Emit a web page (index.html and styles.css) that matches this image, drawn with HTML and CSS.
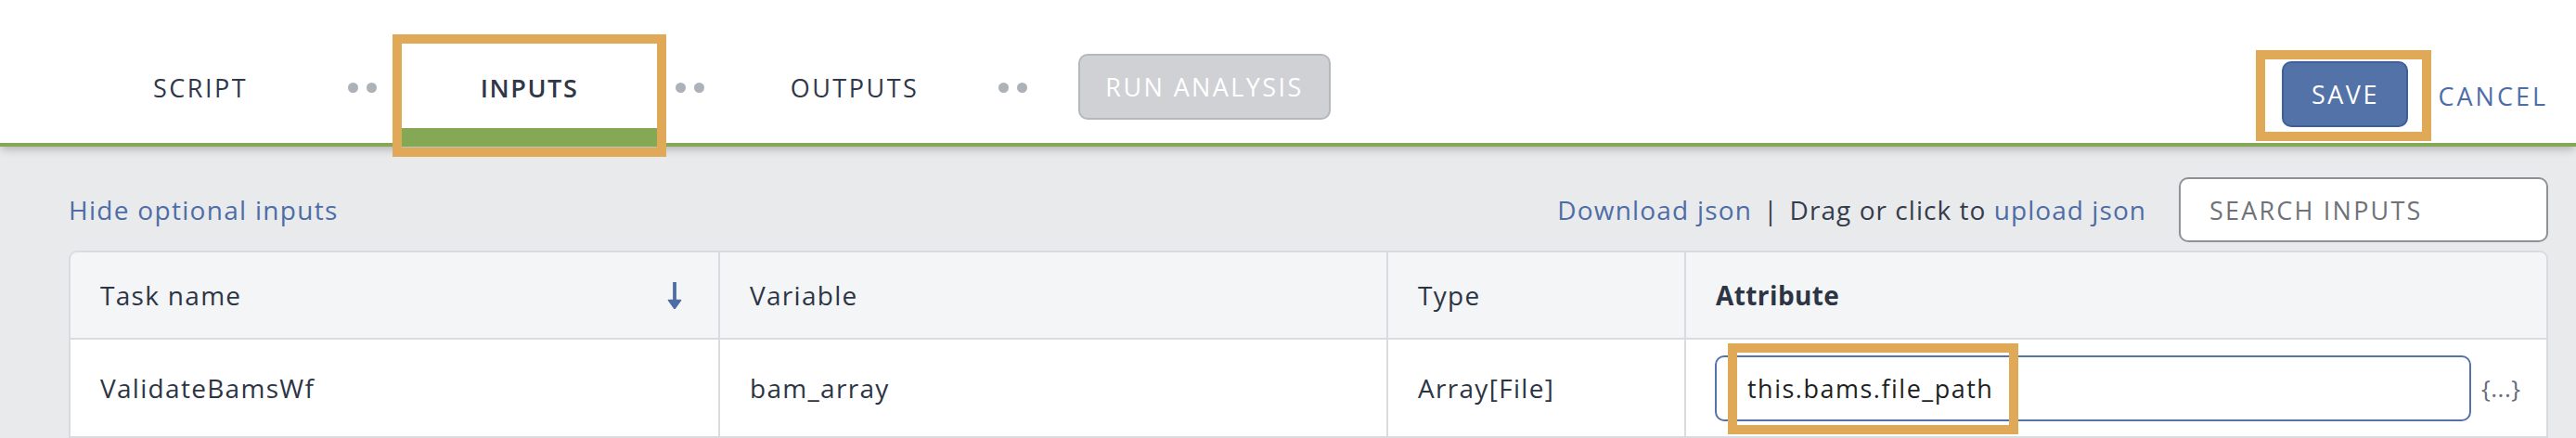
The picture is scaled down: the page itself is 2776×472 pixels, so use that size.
FILE: index.html
```html
<!DOCTYPE html>
<html lang="en">
<head>
<meta charset="utf-8">
<title>Inputs</title>
<link rel="stylesheet" href="styles.css">
</head>
<body>
<header class="topbar">
  <nav class="steps">
    <div class="step step-script">SCRIPT</div>
    <div class="sep"><span class="dot"></span><span class="dot"></span></div>
    <div class="step step-inputs active">INPUTS</div>
    <div class="sep"><span class="dot"></span><span class="dot"></span></div>
    <div class="step step-outputs">OUTPUTS</div>
    <div class="sep"><span class="dot"></span><span class="dot"></span></div>
    <button class="btn-run" type="button" disabled>RUN ANALYSIS</button>
  </nav>
  <div class="actions">
    <div class="highlight-save"><button class="btn-save" type="button">SAVE</button></div>
    <a class="cancel">CANCEL</a>
  </div>
</header>
<main class="content">
  <div class="toolbar">
    <a class="link">Hide optional inputs</a>
    <div class="toolbar-right">
      <span class="json-actions"><a class="link dl">Download json</a><span class="pipe">|</span>Drag or click to <a class="link">upload json</a></span>
      <div class="search">SEARCH INPUTS</div>
    </div>
  </div>
  <div class="grid-table">
    <div class="row head">
      <div class="cell c1"><span>Task name</span>
        <svg class="sort" width="16" height="29" viewBox="0 0 16 29"><path d="M8 0v21" stroke="#4e6da6" stroke-width="3.8" fill="none"/><path d="M1.5 19.5h13L8 28.5z" fill="#4e6da6" stroke="#4e6da6" stroke-width="1.6" stroke-linejoin="round"/></svg>
      </div>
      <div class="cell c2">Variable</div>
      <div class="cell c3">Type</div>
      <div class="cell c4 strong">Attribute</div>
    </div>
    <div class="row body">
      <div class="cell c1">ValidateBamsWf</div>
      <div class="cell c2">bam_array</div>
      <div class="cell c3">Array[File]</div>
      <div class="cell c4">
        <div class="attr-input"><span class="attr-text">this.bams.file_path</span></div>
        <span class="expr">{...}</span>
      </div>
    </div>
  </div>
</main>
</body>
</html>
```

FILE: styles.css
```css
*, *::before, *::after { box-sizing: border-box; }

html, body {
  margin: 0;
  padding: 0;
}

body {
  width: 2776px;
  height: 472px;
  overflow: hidden;
  background: #e9eaec;
  font-family: "Open Sans", "Noto Sans", sans-serif;
  color: #2d3545;
}

/* ---------- top bar ---------- */
.topbar {
  position: relative;
  z-index: 2;
  display: flex;
  height: 158px;
  background: #fff;
  border-bottom: 4px solid #84a854;
  box-shadow: 0 3px 10px -1px rgba(0, 0, 0, 0.28);
}

.steps {
  display: flex;
  align-items: stretch;
  padding-left: 77px;
}

.step {
  display: flex;
  align-items: center;
  justify-content: center;
  padding: 50px 0 16px;
  font-size: 27px;
  letter-spacing: 2.5px;
  color: #2f3749;
}

.step-script { width: 278px; }
.step-inputs { width: 275px; }
.step-outputs { width: 270px; }

.step.active {
  position: relative;
  padding-bottom: 0;
  border-bottom: 16px solid #84a854;
  font-weight: 600;
  letter-spacing: 1.6px;
}

.step.active::before {
  content: "";
  position: absolute;
  left: -10px;
  right: -10px;
  top: 37px;
  bottom: -31px;
  border: 10px solid #e0a957;
}

.sep {
  display: flex;
  align-items: center;
  gap: 9px;
  margin: 0 27px 0 20px;
  padding: 50px 0 16px;
}

.dot {
  width: 11px;
  height: 11px;
  border-radius: 50%;
  background: #adb1b8;
}

.btn-run {
  align-self: flex-start;
  margin: 58px 0 0 28px;
  width: 272px;
  height: 71px;
  border: 2px solid #b5b8bd;
  border-radius: 10px;
  background: #cfd1d5;
  color: #fff;
  font-family: "Open Sans", sans-serif;
  font-size: 27px;
  letter-spacing: 2.4px;
  padding: 0;
}

.actions {
  margin-left: auto;
  align-self: flex-start;
  margin-top: 54px;
  padding-right: 30px;
  display: flex;
  align-items: center;
  gap: 7px;
}

.highlight-save {
  border: 10px solid #e0a957;
  padding: 2px 15px 5px 18px;
}

.btn-save {
  display: block;
  width: 136px;
  height: 71px;
  border: 2px solid #3e5f9a;
  border-radius: 10px;
  background: #5372a7;
  color: #fff;
  font-family: "Open Sans", sans-serif;
  font-size: 27px;
  letter-spacing: 2.5px;
  padding: 0;
}

.cancel {
  font-size: 27px;
  letter-spacing: 3px;
  color: #4e6da6;
}

/* ---------- content ---------- */
.content {
  padding: 33px 30px 0 74px;
}

.toolbar {
  display: flex;
  justify-content: space-between;
  align-items: center;
  height: 70px;
  margin-bottom: 9px;
  font-size: 28px;
  letter-spacing: 1.3px;
}

.link {
  color: #4e6da6;
}

.toolbar-right {
  display: flex;
  align-items: center;
  gap: 35px;
}

.json-actions {
  color: #353c4b;
  letter-spacing: 1.05px;
}

.json-actions .dl {
  letter-spacing: 1.2px;
}

.pipe {
  margin: 0 12px 0 12px;
}

.search {
  display: flex;
  align-items: center;
  width: 398px;
  height: 70px;
  padding-left: 31px;
  background: #fff;
  border: 2px solid #8e9196;
  border-radius: 10px;
  font-size: 27px;
  letter-spacing: 2.2px;
  color: #6f7277;
}

/* ---------- table ---------- */
.grid-table {
  border: 2px solid #dadbde;
  border-bottom: none;
  border-radius: 9px 9px 0 0;
  overflow: hidden;
}

.row {
  display: grid;
  grid-template-columns: 698px 720px 321px 929px;
  border-bottom: 2px solid #dadbde;
}

.row.head {
  height: 94px;
  background: #f4f5f7;
}

.row.body {
  height: 106px;
  background: #fff;
}

.cell {
  display: flex;
  align-items: center;
  padding-left: 32px;
  font-size: 28px;
  letter-spacing: 1.3px;
  color: #2d3545;
}

.c2, .c3, .c4 {
  border-left: 2px solid #dadbde;
}

.head .c1 {
  justify-content: space-between;
  padding-right: 39px;
}

.strong {
  font-weight: 700;
  letter-spacing: 0.4px;
}

.body .c4 {
  padding-left: 31px;
  gap: 11px;
}

.attr-input {
  position: relative;
  display: flex;
  align-items: center;
  width: 815px;
  height: 71px;
  padding-left: 33px;
  border: 2px solid #5573a8;
  border-radius: 10px;
  background: #fff;
}

.attr-input::before {
  content: "";
  position: absolute;
  left: 12px;
  top: -15px;
  width: 313px;
  height: 98px;
  border: 10px solid #e0a957;
}

.attr-text {
  font-size: 27px;
  letter-spacing: 1.5px;
  color: #1d1f22;
}

.expr {
  font-size: 26px;
  letter-spacing: 0.5px;
  color: #666d79;
}
```
